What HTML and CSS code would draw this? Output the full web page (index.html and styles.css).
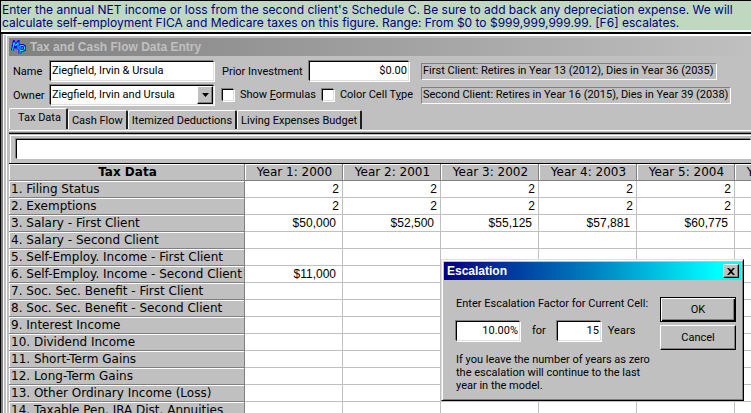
FILE: index.html
```html
<!DOCTYPE html>
<html lang="en">
<head>
<meta charset="utf-8">
<title>Tax and Cash Flow Data Entry</title>
<link rel="stylesheet" href="styles.css">
</head>
<body>
<p class="help">Enter the annual NET income or loss from the second client's Schedule C. Be sure to add back any depreciation expense. We will calculate self-employment FICA and Medicare taxes on this figure. Range: From $0 to $999,999,999.99. [F6] escalates.</p>
<main class="window">
  <header class="titlebar">
    <svg class="logo" viewBox="0 0 15 15" aria-hidden="true">
      <g class="logo-edge"><path d="M1.500 10.500L3 2.500l1.500 3.500L7 2.500v7"/><path d="M9 13.500V5.500h3l1.500 1v3l-1.500 1H9"/></g>
      <g class="logo-line"><path d="M1.500 10.500L3 2.500l1.500 3.500L7 2.500v7"/><path d="M9 13.500V5.500h3l1.500 1v3l-1.500 1H9"/></g>
    </svg>
    <h1>Tax and Cash Flow Data Entry</h1>
  </header>
  <form class="fields">
    <label for="name">Name</label>
    <input class="box" id="name" value="Ziegfield, Irvin &amp; Ursula">
    <div class="group prior">
      <label for="prior">Prior Investment</label>
      <input class="box money" id="prior" value="$0.00">
    </div>
    <output class="status">First Client: Retires in Year 13 (2012), Dies in Year 36 (2035)</output>
    <label for="owner">Owner</label>
    <div class="combo">
      <select class="box" id="owner"><option>Ziegfield, Irvin and Ursula</option></select>
      <span class="arrow"><svg viewBox="0 0 7 4" aria-hidden="true"><path d="M0 0h7L3.500 4z"/></svg></span>
    </div>
    <div class="group">
      <label class="check"><input type="checkbox"><span>Show <u>F</u>ormulas</span></label>
      <label class="check"><input type="checkbox"><span>Color Cell T<u>y</u>pe</span></label>
    </div>
    <output class="status">Second Client: Retires in Year 16 (2015), Dies in Year 39 (2038)</output>
  </form>
  <nav class="tabs">
    <button class="tab active" type="button">Tax Data</button>
    <button class="tab" type="button">Cash Flow</button>
    <button class="tab" type="button">Itemized Deductions</button>
    <button class="tab" type="button">Living Expenses Budget</button>
  </nav>
  <div class="editbar"><input aria-label="Cell value"></div>
  <table class="grid">
    <thead>
      <tr><th class="first">Tax Data</th><th>Year 1: 2000</th><th>Year 2: 2001</th><th>Year 3: 2002</th><th>Year 4: 2003</th><th>Year 5: 2004</th><th>Year 6: 2005</th></tr>
    </thead>
    <tbody>
      <tr><th>1. Filing Status</th><td>2</td><td>2</td><td>2</td><td>2</td><td>2</td><td></td></tr>
      <tr><th>2. Exemptions</th><td>2</td><td>2</td><td>2</td><td>2</td><td>2</td><td></td></tr>
      <tr class="cash"><th>3. Salary - First Client</th><td>$50,000</td><td>$52,500</td><td>$55,125</td><td>$57,881</td><td>$60,775</td><td></td></tr>
      <tr><th>4. Salary - Second Client</th><td></td><td></td><td></td><td></td><td></td><td></td></tr>
      <tr><th>5. Self-Employ. Income - First Client</th><td></td><td></td><td></td><td></td><td></td><td></td></tr>
      <tr class="cash"><th>6. Self-Employ. Income - Second Client</th><td>$11,000</td><td></td><td></td><td></td><td></td><td></td></tr>
      <tr><th>7. Soc. Sec. Benefit - First Client</th><td></td><td></td><td></td><td></td><td></td><td></td></tr>
      <tr><th>8. Soc. Sec. Benefit - Second Client</th><td></td><td></td><td></td><td></td><td></td><td></td></tr>
      <tr><th>9. Interest Income</th><td></td><td></td><td></td><td></td><td></td><td></td></tr>
      <tr><th>10. Dividend Income</th><td></td><td></td><td></td><td></td><td></td><td></td></tr>
      <tr><th>11. Short-Term Gains</th><td></td><td></td><td></td><td></td><td></td><td></td></tr>
      <tr><th>12. Long-Term Gains</th><td></td><td></td><td></td><td></td><td></td><td></td></tr>
      <tr><th>13. Other Ordinary Income (Loss)</th><td></td><td></td><td></td><td></td><td></td><td></td></tr>
      <tr><th>14. Taxable Pen. IRA Dist. Annuities</th><td></td><td></td><td></td><td></td><td></td><td></td></tr>
    </tbody>
  </table>
</main>
<section class="dialog" role="dialog" aria-labelledby="dlg-title">
  <header class="dialog-title">
    <h2 id="dlg-title">Escalation</h2>
    <button class="close" type="button" aria-label="Close"><svg viewBox="0 0 8 7" aria-hidden="true"><path d="M0 0h2l2 2 2-2h2L5 3.500 8 7H6L4 5 2 7H0l3-3.500z"/></svg></button>
  </header>
  <form class="dialog-body">
    <div class="dialog-text">
      <label for="factor">Enter Escalation Factor for Current Cell:</label>
      <div class="factor">
        <input class="box" id="factor" value="10.00%">
        <label for="years">for</label>
        <input class="box years" id="years" value="15">
        <span>Years</span>
      </div>
      <p>If you leave the number of years as zero the escalation will continue to the last year in the model.</p>
    </div>
    <div class="actions">
      <button class="push default" type="button">OK</button>
      <button class="push" type="button">Cancel</button>
    </div>
  </form>
</section>
</body>
</html>
```
FILE: styles.css
```css
:root {
  --face: #c0c0c0;
  --shade: #808080;
  --ui: Roboto, sans-serif;
  --wide: "DejaVu Sans", sans-serif;
}
* { box-sizing: border-box; }
body {
  margin: 0;
  height: 100vh;
  overflow: hidden;
  display: flex;
  flex-direction: column;
  position: relative;
  background: #000;
  color: #000;
  font: 11px/14px var(--ui);
}
h1, h2, p { margin: 0; }
input, select, button { font: inherit; color: inherit; border-radius: 0; margin: 0; }
.help {
  margin: 1px 0 1px 1px;
  padding: 2px 1px 1px;
  border-bottom: 2px solid #fff;
  background: #c0d8c0;
  color: #000080;
  font: 12px/13px Inter, sans-serif;
}
.window {
  flex: 1;
  min-height: 0;
  overflow: hidden;
  margin: 1px 0 0 1px;
  padding-left: 1px;
  border-left: 2px solid var(--shade);
  background: var(--face);
  box-shadow: inset 1px 1px #fff, inset 3px 1px var(--face), inset 4px 2px #fff;
}
.titlebar {
  display: flex;
  align-items: center;
  gap: 4px;
  height: 18px;
  margin: 4px 0 0 5px;
  padding-left: 2px;
  background: linear-gradient(90deg, #808080, #c0c0c0);
  color: var(--face);
}
.titlebar h1 { font: bold 12px/16px "Liberation Sans", sans-serif; }
.logo { width: 15px; height: 15px; fill: none; }
.logo-edge { stroke: #0000ff; stroke-width: 3; }
.logo-line { stroke: #00ffff; stroke-width: 1; }
.fields {
  display: grid;
  grid-template-columns: 32px 164px 190px max-content;
  grid-auto-rows: 20px;
  gap: 4px 5px;
  align-items: center;
  padding: 5px 0 0 9px;
}
.fields > .status { margin-left: 7px; }
.fields > label, .prior label { padding-top: 2px; }
.box {
  width: 100%;
  height: 20px;
  padding: 0 1px 1px;
  background: #fff;
  border: 1px solid;
  border-color: #000 #dfdfdf #dfdfdf #000;
  outline: 0;
  box-shadow: -1px -1px var(--shade), 1px 1px #fff;
}
.group { display: flex; align-items: center; gap: 6px; padding-left: 3px; white-space: nowrap; }
.group .box { flex: 1; min-width: 0; }
.money, .factor .box { text-align: right; }
.status {
  height: 17px;
  padding: 0 2px 0 1px;
  border: 1px solid;
  border-color: var(--shade) #fff #fff var(--shade);
  justify-self: start;
}
.combo { display: grid; }
.combo > * { grid-area: 1 / 1; }
.combo select { appearance: none; }
.arrow, .close, .push {
  background: var(--face);
  border: 1px solid;
  border-color: #fff #000 #000 #fff;
  box-shadow: inset -1px -1px var(--shade);
}
.arrow {
  display: grid;
  place-items: center;
  justify-self: end;
  align-self: center;
  width: 16px;
  height: 18px;
  margin-right: 1px;
  pointer-events: none;
}
.arrow svg { width: 7px; height: 4px; }
.check { display: flex; align-items: center; gap: 6px; }
.check input {
  appearance: none;
  width: 12px;
  height: 12px;
  background: #fff;
  border: 1px solid;
  border-color: #000 #dfdfdf #dfdfdf #000;
  box-shadow: -1px -1px var(--shade), 1px 1px #fff;
}
.tabs {
  display: flex;
  align-items: flex-end;
  height: 23px;
  margin: 3px 0 0 5px;
  padding-bottom: 1px;
  border-bottom: 1px solid #fff;
}
.tab {
  height: 19px;
  padding: 2px 3px 0;
  background: var(--face);
  border: 1px solid;
  border-width: 1px 2px 0 1px;
  border-color: #fff #202020 #fff #fff;
  border-radius: 2px 2px 0 0;
  white-space: nowrap;
}
.tab.active { height: 21px; padding: 0 5px 2px 8px; }
.editbar {
  margin: 2px 0 0 5px;
  padding: 5px 0 4px 7px;
  border: solid #000;
  border-width: 1px 0;
  box-shadow: 0 -1px var(--shade), inset 1px 1px var(--face), inset 2px 2px #fff;
}
.editbar input {
  display: block;
  width: 100%;
  height: 20px;
  background: #fff;
  border: 1px solid;
  border-color: #000 #fff #fff #000;
  box-shadow: -1px -1px var(--shade);
}
.grid {
  table-layout: fixed;
  width: 824px;
  margin-left: 5px;
  border-collapse: separate;
  border-spacing: 0;
  background: #fff;
}
.grid th, .grid td {
  height: 17px;
  padding: 0 3px;
  border: 0 solid var(--face);
  border-width: 0 1px 1px 0;
  font: 12px/14px "Liberation Sans", sans-serif;
  white-space: nowrap;
}
.grid th {
  padding: 0 0 0 2px;
  background: var(--face);
  border-color: var(--shade);
  box-shadow: inset 1px 1px #fff;
  font: 12px/14px var(--wide);
  text-align: left;
}
.grid thead th { text-align: center; }
.grid .first { width: 236px; font-weight: bold; }
.grid td { text-align: right; }
.grid .cash td { padding-right: 6px; }
.dialog {
  position: absolute;
  left: 441px;
  top: 259px;
  width: 303px;
  padding: 2px;
  background: var(--face);
  border: 1px solid;
  border-color: #dfdfdf #000 #000 #dfdfdf;
  box-shadow: inset 1px 1px #fff, inset -1px -1px var(--shade);
}
.dialog-title {
  display: flex;
  align-items: center;
  justify-content: space-between;
  height: 18px;
  padding: 0 2px 0 3px;
  background: linear-gradient(90deg, #000080, #0080c0 50%, #00ffff 92%);
  color: #fff;
}
.dialog-title h2 { font: bold 12px/16px "Liberation Sans", sans-serif; }
.close { display: grid; place-items: center; width: 16px; height: 14px; padding: 0; }
.close svg { width: 8px; height: 7px; }
.dialog-body { display: flex; justify-content: space-between; padding: 16px 5px 6px 12px; }
.dialog-text { padding-top: 1px; }
.factor { display: flex; align-items: center; gap: 12px; margin: 10px 0 12px; }
.factor .box { width: 64px; }
.factor .years { width: 44px; margin: 0 -5px 0 -1px; }
.dialog-text p { width: 200px; line-height: 13px; }
.actions { display: flex; flex-direction: column; gap: 3px; width: 76px; padding-top: 1px; }
.push { height: 25px; padding: 0; }
.push.default { border-color: #000; box-shadow: inset 1px 1px #fff, inset -1px -1px #000, inset -2px -2px var(--shade); }
```
